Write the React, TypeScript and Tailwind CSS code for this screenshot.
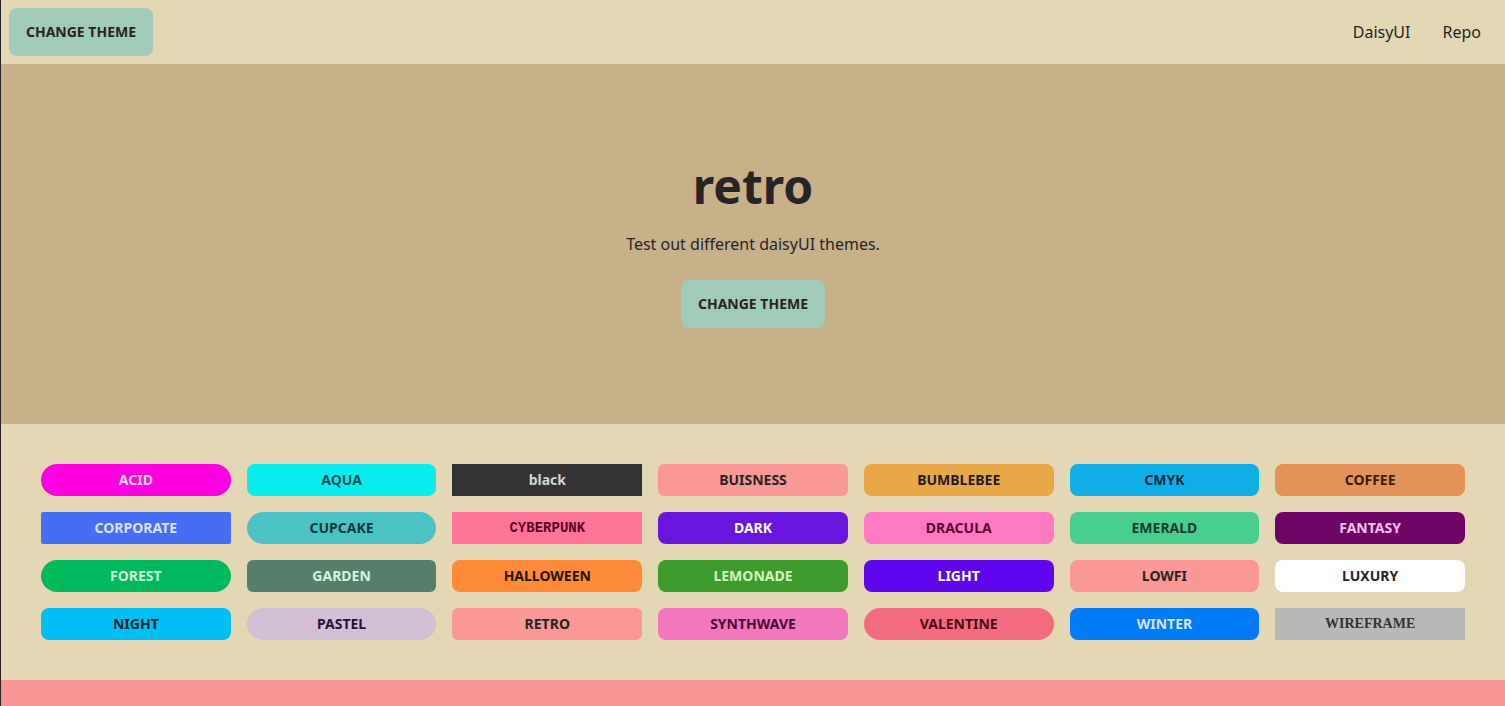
import React from "react";

type T = { name: string; bg: string; fg: string; r: string; font?: string };

const themes: T[] = [
  { name: "ACID", bg: "bg-[#ff00e1]", fg: "text-[#fcd6f6]", r: "rounded-full" },
  { name: "AQUA", bg: "bg-[#09ecf0]", fg: "text-[#005357]", r: "rounded-lg" },
  { name: "black", bg: "bg-[#343232]", fg: "text-[#d6d6d6]", r: "rounded-none" },
  { name: "BUISNESS", bg: "bg-[#fa9896]", fg: "text-[#282425]", r: "rounded-md" },
  { name: "BUMBLEBEE", bg: "bg-[#e9a847]", fg: "text-[#1e1c2a]", r: "rounded-lg" },
  { name: "CMYK", bg: "bg-[#10afe8]", fg: "text-[#00293b]", r: "rounded-lg" },
  { name: "COFFEE", bg: "bg-[#e3935a]", fg: "text-[#3a1c0a]", r: "rounded-lg" },
  { name: "CORPORATE", bg: "bg-[#466ef5]", fg: "text-[#dbe2ff]", r: "rounded-[2px]" },
  { name: "CUPCAKE", bg: "bg-[#4dc2c6]", fg: "text-[#0b3a3c]", r: "rounded-full" },
  { name: "CYBERPUNK", bg: "bg-[#ff7598]", fg: "text-[#5a0422]", r: "rounded-none", font: "font-['Liberation_Mono',monospace]" },
  { name: "DARK", bg: "bg-[#6717dd]", fg: "text-[#ffffff]", r: "rounded-lg" },
  { name: "DRACULA", bg: "bg-[#ff79c3]", fg: "text-[#5a0532]", r: "rounded-lg" },
  { name: "EMERALD", bg: "bg-[#48cf8e]", fg: "text-[#1f3b2e]", r: "rounded-lg" },
  { name: "FANTASY", bg: "bg-[#6f0468]", fg: "text-[#f5c4f2]", r: "rounded-lg" },
  { name: "FOREST", bg: "bg-[#00b95d]", fg: "text-[#c8f7d8]", r: "rounded-full" },
  { name: "GARDEN", bg: "bg-[#567f6b]", fg: "text-[#d0f5dd]", r: "rounded-md" },
  { name: "HALLOWEEN", bg: "bg-[#ff8a38]", fg: "text-[#211507]", r: "rounded-lg" },
  { name: "LEMONADE", bg: "bg-[#3d9c2e]", fg: "text-[#d7f7c2]", r: "rounded-lg" },
  { name: "LIGHT", bg: "bg-[#5f06ef]", fg: "text-[#ffffff]", r: "rounded-lg" },
  { name: "LOWFI", bg: "bg-[#fa9896]", fg: "text-[#282425]", r: "rounded-lg" },
  { name: "LUXURY", bg: "bg-[#ffffff]", fg: "text-[#282425]", r: "rounded-lg" },
  { name: "NIGHT", bg: "bg-[#00bff5]", fg: "text-[#00253a]", r: "rounded-lg" },
  { name: "PASTEL", bg: "bg-[#d3c0d6]", fg: "text-[#2b0f3c]", r: "rounded-full" },
  { name: "RETRO", bg: "bg-[#fa9896]", fg: "text-[#282425]", r: "rounded-md" },
  { name: "SYNTHWAVE", bg: "bg-[#f277bd]", fg: "text-[#4a0a3a]", r: "rounded-lg" },
  { name: "VALENTINE", bg: "bg-[#f56b7e]", fg: "text-[#4d0a14]", r: "rounded-full" },
  { name: "WINTER", bg: "bg-[#007af5]", fg: "text-[#d4e6ff]", r: "rounded-lg" },
  { name: "WIREFRAME", bg: "bg-[#b8b8b8]", fg: "text-[#333333]", r: "rounded-none", font: "font-['Liberation_Serif',serif]" },
];

export default function App() {
  return (
    <div className="min-h-[706px] bg-[#e4d8b4] border-l border-[#282425] text-[#282425] font-['Noto_Sans',sans-serif]">
      <header className="h-16 flex items-center justify-between px-2">
        <button className="h-12 w-36 rounded-lg bg-[#a0cbb8] text-sm font-bold uppercase">
          Change Theme
        </button>
        <nav className="flex items-center">
          <a className="h-12 px-4 flex items-center text-base">DaisyUI</a>
          <a className="h-12 px-4 flex items-center text-base">Repo</a>
        </nav>
      </header>
      <section className="h-[360px] bg-[#c8b188] flex flex-col items-center justify-center pt-[2px]">
        <h1 className="text-5xl font-bold leading-none">retro</h1>
        <p className="mt-[22px] text-base leading-6">Test out different daisyUI themes.</p>
        <button className="mt-6 h-12 w-36 rounded-lg bg-[#a0cbb8] text-sm font-bold uppercase">
          Change Theme
        </button>
      </section>
      <section className="px-10 py-10 grid grid-cols-7 gap-4">
        {themes.map((t) => (
          <button
            key={t.name}
            className={`h-8 flex items-center justify-center text-sm font-bold ${t.bg} ${t.fg} ${t.r} ${t.font ?? ""}`}
          >
            {t.name}
          </button>
        ))}
      </section>
      <footer className="h-[26px] bg-[#fb9696]" />
    </div>
  );
}
